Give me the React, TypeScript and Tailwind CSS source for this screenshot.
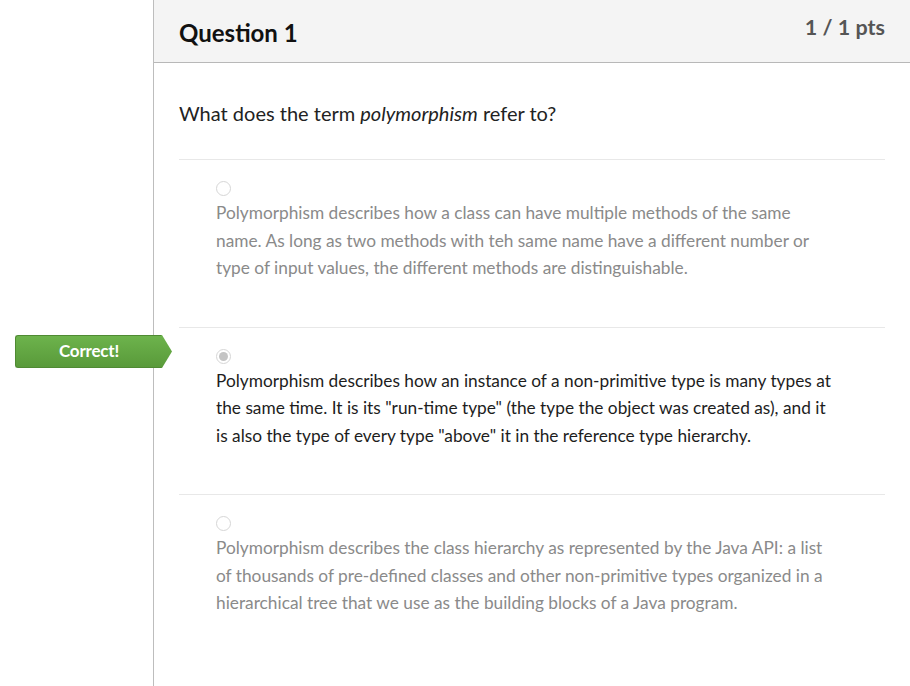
const answers = [
  {
    text: "Polymorphism describes how a class can have multiple methods of the same name. As long as two methods with teh same name have a different number or type of input values, the different methods are distinguishable.",
    selected: false,
  },
  {
    text: 'Polymorphism describes how an instance of a non-primitive type is many types at the same time. It is its "run-time type" (the type the object was created as), and it is also the type of every type "above" it in the reference type hierarchy.',
    selected: true,
  },
  {
    text: "Polymorphism describes the class hierarchy as represented by the Java API: a list of thousands of pre-defined classes and other non-primitive types organized in a hierarchical tree that we use as the building blocks of a Java program.",
    selected: false,
  },
];

function Radio({ checked }: { checked: boolean }) {
  return (
    <div className="w-[15px] h-[15px] rounded-full border border-[#d6d6d6] bg-white flex items-center justify-center">
      {checked && <div className="w-[9px] h-[9px] rounded-full bg-[#c4c4c4]" />}
    </div>
  );
}

function CorrectBadge() {
  return (
    <div className="absolute left-[-164px] top-[7px] flex items-center">
      <div className="w-[147px] h-[33px] rounded-l-[3px] bg-gradient-to-b from-[#6db34c] to-[#599a3a] border border-[#4f8a33] border-r-0 flex items-center justify-center text-white font-bold text-[17px] tracking-[-0.2px]">
        Correct!
      </div>
      <svg width="11" height="33" viewBox="0 0 11 33" className="-ml-px">
        <defs>
          <linearGradient id="g" x1="0" y1="0" x2="0" y2="1">
            <stop offset="0" stopColor="#6db34c" />
            <stop offset="1" stopColor="#599a3a" />
          </linearGradient>
        </defs>
        <path d="M0 0 L1 0 L11 16.5 L1 33 L0 33 Z" fill="url(#g)" />
      </svg>
    </div>
  );
}

export default function App() {
  return (
    <div
      className="w-[910px] h-[686px] bg-white flex overflow-hidden"
      style={{ fontFamily: "Lato, 'Open Sans', sans-serif" }}
    >
      <div className="w-[153px] shrink-0" />
      <div className="flex-1 border-l border-[#bdbdbd] flex flex-col">
        <div className="h-[63px] bg-[#f4f4f4] border-b border-[#b8b8b8] flex justify-between pl-[25px] pr-[25px]">
          <h2 className="pt-[17px] text-[24px] font-bold text-[#111] leading-[32px]">Question 1</h2>
          <div className="pt-[13px] text-[21.5px] font-bold text-[#555] leading-[28px]">1 / 1 pts</div>
        </div>
        <div className="px-[25px]">
          <p className="mt-[37px] text-[20px] text-[#222] leading-[26px]">
            What does the term <i>polymorphism</i> refer to?
          </p>
          <div className="mt-[33px]">
            {answers.map((a, i) => (
              <div key={i} className="relative border-t border-[#e8e8e8] pl-[37px] pt-[21px] pb-[45px]">
                {a.selected && <CorrectBadge />}
                <Radio checked={a.selected} />
                <p
                  className={
                    "mt-[3px] text-[17.3px] leading-[27.5px] pr-[49px] " +
                    (a.selected ? "text-[#1d1d1d]" : "text-[#8a8a8a]")
                  }
                >
                  {a.text}
                </p>
              </div>
            ))}
          </div>
        </div>
      </div>
    </div>
  );
}
